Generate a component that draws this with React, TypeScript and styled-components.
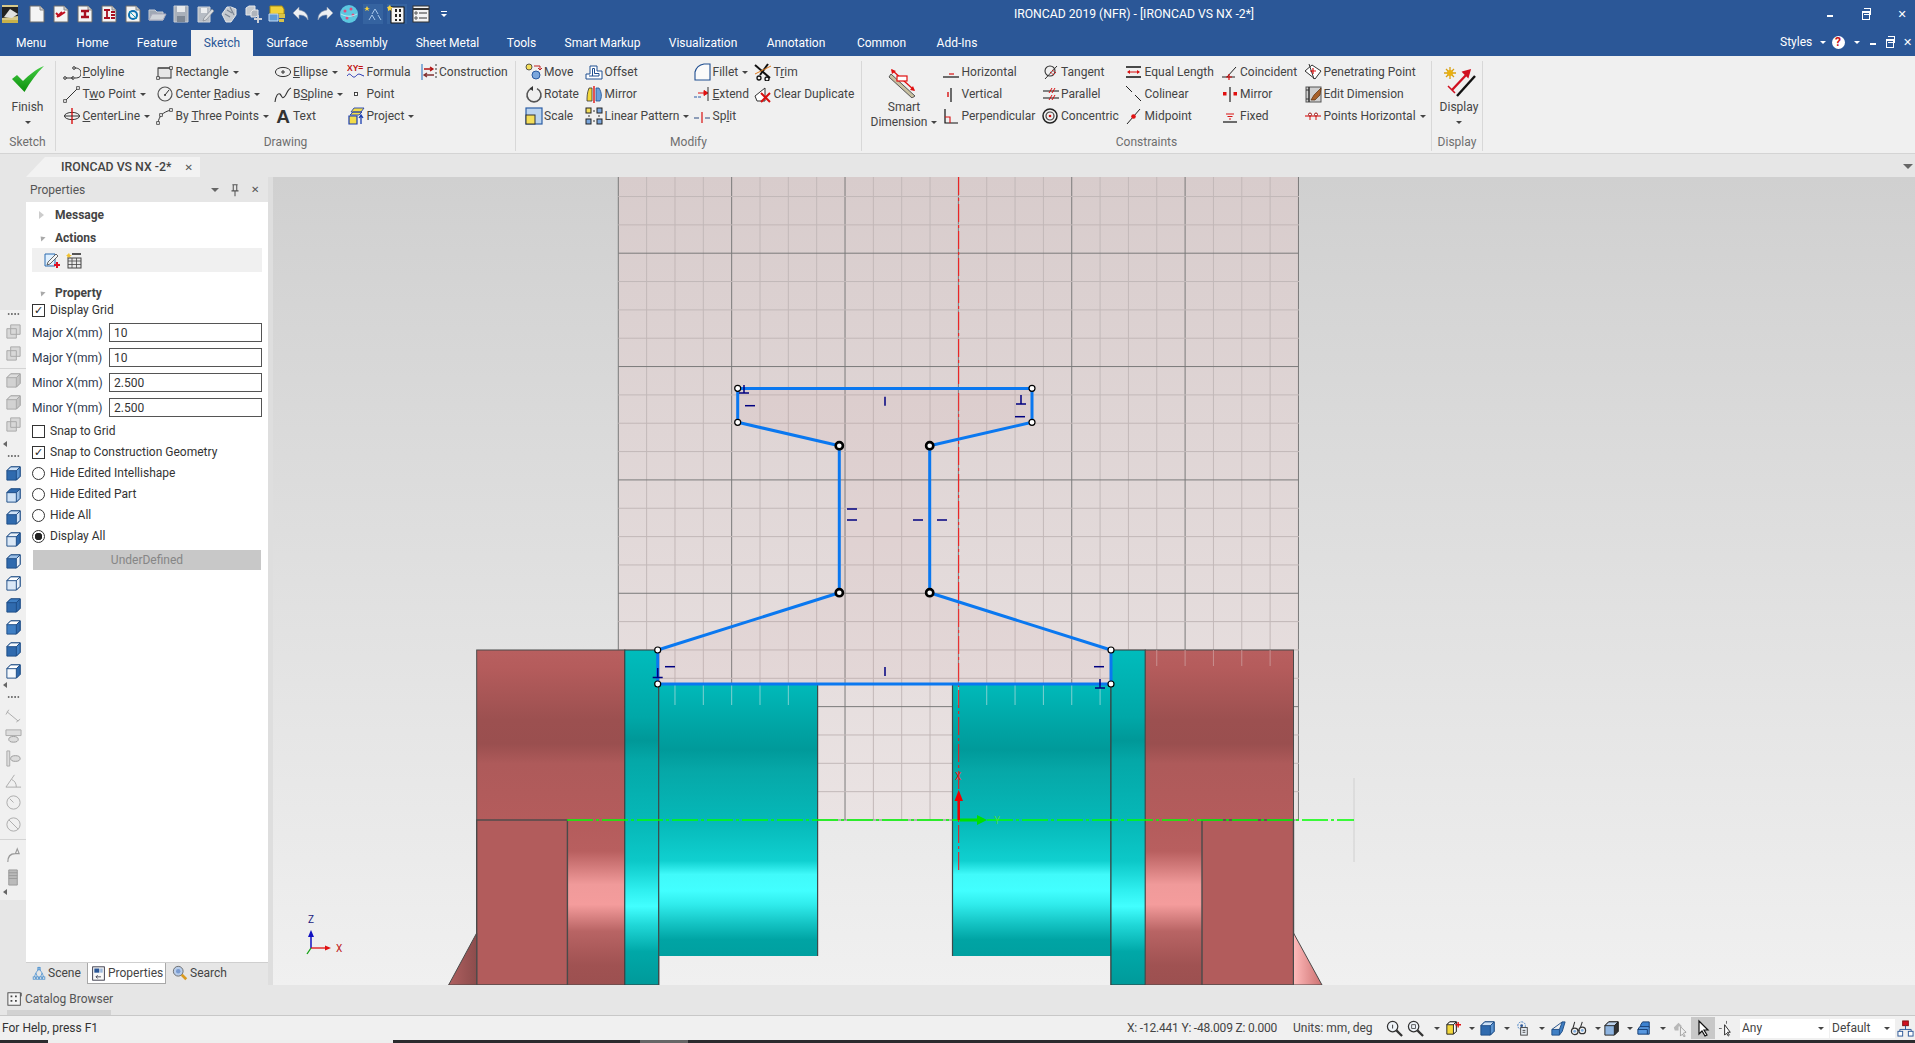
import React from 'react';
import styled, { createGlobalStyle } from 'styled-components';

const BLUE = '#2b5797';
const FONT = '"Roboto", "Liberation Sans", sans-serif';

const GlobalStyle = createGlobalStyle`
  html, body {
    margin: 0;
    padding: 0;
    overflow: hidden;
    background: #e6e6e6;
    font-family: ${FONT};
  }
`;

/* ---------- icons ---------- */

const s = (stroke: string, w = 1) => ({ stroke, strokeWidth: w, fill: 'none' });

const page = (inner?: React.ReactNode) => (
  <>
    <path d="M3 2h10l4 4v12H3z" fill="#f4f4f4" stroke="#6a6a6a" />
    <path d="M13 2v4h4" fill="#ccc" stroke="#8a8a8a" />
    {inner}
  </>
);

const cube = (top: string, side: string, front: string, line = '#1e4d86') => (
  <>
    <path d="M2 6l4-4h10v10l-4 4H2z" fill={front} stroke={line} />
    <path d="M2 6l4-4h10l-4 4z" fill={top} stroke={line} />
    <path d="M12 6l4-4v10l-4 4z" fill={side} stroke={line} />
  </>
);

const Q: Record<string, React.ReactNode> = {
  logo: (
    <>
      <rect x="1" y="1" width="16" height="18" fill="#d8c98a" />
      <path d="M1 3h16v9l-16 2z" fill="#222" />
      <path d="M3 13l6-8 8 5-6 4z" fill="#e0e0e0" />
      <rect x="1" y="16" width="16" height="3" fill="#c9b24a" />
    </>
  ),
  newDoc: page(),
  redCheck: page(<path d="M5 9l3 3 6-4M6 13l5-5" {...s('#c01020', 2)} />),
  redI: page(<path d="M6 7h8M10 7v6M6 13h8" {...s('#a81020', 2.4)} />),
  redE: page(<path d="M5 6h6M8 6v8M5 14h6M12 8h4M12 11h4M12 14h4" {...s('#a81020', 1.8)} />),
  blueDoc: page(
    <>
      <circle cx="10" cy="11" r="4" {...s('#1070b0', 2)} />
      <path d="M6 7l8 8" {...s('#18a0c0', 1)} />
    </>
  ),
  folder: (
    <>
      <path d="M2 6h6l2 2h6v8H2z" fill="#9fa8b4" stroke="#c9ced6" />
      <path d="M5 10h14l-3 6H2z" fill="#cfd3d8" stroke="#aab" />
    </>
  ),
  save: (
    <>
      <path d="M3 2h14v16H3z" fill="#a9b0ba" stroke="#c7ccd3" />
      <rect x="6" y="2" width="8" height="6" fill="#e8eaec" />
      <rect x="6" y="12" width="8" height="6" fill="#7d8794" />
    </>
  ),
  saveAs: (
    <>
      <path d="M3 3h12v15H3z" fill="#b6bcc4" stroke="#d0d4da" />
      <rect x="6" y="4" width="6" height="5" fill="#eceef0" />
      <path d="M9 14l8-9 2 2-8 9-3 1z" fill="#d9dcdf" stroke="#7a8088" strokeWidth=".6" />
    </>
  ),
  hand: (
    <>
      <path d="M3 10l5-7h4l5 2v6l-5 7H7z" fill="#c4c9cf" stroke="#e4e6e8" />
      <path d="M8 6l5 3M6 10l5 3M11 3l4 8" {...s('#7d8794', 1.2)} />
    </>
  ),
  cubesPlus: (
    <>
      <path d="M3 4l3-2h6v7l-3 2H3z" fill="#c4c9cf" stroke="#e6e8ea" />
      <path d="M8 8l2-2h5v5l-2 2H8z" fill="#aeb4bc" stroke="#e6e8ea" />
      <path d="M15 11v8M11 15h8" {...s('#ccd0d6', 2)} />
    </>
  ),
  layers: (
    <>
      <path d="M3 2h12l2 3v5H3z" fill="#f1d23a" stroke="#a88c10" />
      <path d="M2 10h9v7H2z" fill="#5f9bd6" stroke="#c6dcf2" />
      <path d="M12 10h6v4h-6zM12 15h5v3h-5z" fill="#d7c24a" />
    </>
  ),
  undo: <path d="M8 3L2 9l6 6v-4c4 0 7 1 9 5 0-6-3-9-9-10z" fill="#eef0f3" stroke="#8f9cb0" strokeWidth=".6" />,
  redo: <path d="M12 3l6 6-6 6v-4c-4 0-7 1-9 5 0-6 3-9 9-10z" fill="#eef0f3" stroke="#8f9cb0" strokeWidth=".6" />,
  globe: (
    <>
      <circle cx="10" cy="10" r="9" fill="#5cc8e0" />
      <circle cx="6" cy="7" r="1.5" fill="#e24b7c" />
      <circle cx="12" cy="5" r="1.5" fill="#e24b7c" />
      <circle cx="14" cy="11" r="1.5" fill="#e24b7c" />
      <circle cx="8" cy="14" r="1.5" fill="#e24b7c" />
      <path d="M2 10c5 3 11 3 16 0" {...s('#bde8f2', 1)} />
    </>
  ),
  tree: (
    <>
      <rect x="0" y="0" width="20" height="22" fill="#3563a0" />
      <path d="M3 4l1-2 1 2 2 0-2 1 1 2-2-1-2 1 1-2-2-1z" fill="#f4d03f" />
      <path d="M12 5l-3 5M12 5l3 5M9 11l-3 5M9 11l3 5M15 11l3 5" {...s('#a9c8ec', 1)} />
    </>
  ),
  film: (
    <>
      <rect x="0" y="0" width="20" height="22" fill="#3563a0" />
      <rect x="4" y="3" width="13" height="16" fill="#f4f4f4" stroke="#111" />
      <path d="M8 5h2v3H8zM12 5h2v3h-2zM8 10h2v3H8zM12 10h2v3h-2zM8 15h2v2H8zM12 15h2v2h-2z" fill="#222" />
      <path d="M1 3l2-2 1 2 2 0-2 2 1 2-2-1-2 1 0-2-1-2z" fill="#f4d03f" />
    </>
  ),
  list: (
    <>
      <rect x="2" y="2" width="16" height="16" fill="#f4f4f4" stroke="#333" />
      <path d="M2 5h16" {...s('#333', 2)} />
      <path d="M4 8h2v2H4zM4 13h2v2H4z" fill="#fff" stroke="#333" strokeWidth=".8" />
      <path d="M8 9h8M8 14h8" {...s('#333', 1)} />
    </>
  ),
};

const sq = (x: number, y: number, fill = '#fff') => (
  <rect x={x - 1.3} y={y - 1.3} width="2.6" height="2.6" fill={fill} stroke="#333" strokeWidth=".8" />
);

const R: Record<string, React.ReactNode> = {
  polyline: (
    <>
      <path d="M3 15h7M12 15c5 0 6-2 6-5s-2-5-6-5" {...s('#333')} />
      <circle cx="2" cy="15" r="1.3" {...s('#333')} />
      <circle cx="10" cy="15" r="1.3" {...s('#333')} />
      <circle cx="11" cy="5" r="1.3" {...s('#333')} />
    </>
  ),
  twoPoint: (
    <>
      <path d="M2 16L15 3" {...s('#333')} />
      {sq(2, 16)}
      {sq(15, 3)}
    </>
  ),
  centerLine: (
    <>
      <ellipse cx="9" cy="9" rx="7.5" ry="3.6" {...s('#333')} />
      <path d="M9 1v16" {...s('#d81010', 1.4)} />
      <path d="M1 9h16" {...s('#333', 1)} />
    </>
  ),
  rectangle: (
    <>
      <rect x="2" y="5" width="13" height="10" fill="#e7e7e7" stroke="#333" />
      <path d="M2 5h13" {...s('#555', 1.4)} />
      {sq(2, 15)}
      {sq(15, 5)}
    </>
  ),
  centerRadius: (
    <>
      <circle cx="9" cy="9" r="7" {...s('#555', 1.2)} />
      <circle cx="9" cy="10" r="1" fill="#333" />
      <path d="M9 10l4-5" {...s('#333')} />
    </>
  ),
  threePoints: (
    <>
      <path d="M2 16C3 9 7 5 15 3" {...s('#333')} />
      {sq(2, 16)}
      {sq(5, 8)}
      {sq(15, 3)}
    </>
  ),
  ellipse: (
    <>
      <ellipse cx="9" cy="9" rx="7.6" ry="4.6" {...s('#333')} />
      <path d="M9 7v4M7 9h4" {...s('#333')} />
    </>
  ),
  bspline: <path d="M1 17c1-7 3-9 5-8 2 2 2 6 5 2 2-3 3-7 6-8" {...s('#333', 1.1)} />,
  bigA: (
    <text x="9" y="16" textAnchor="middle" fontSize="19" fontWeight="700" fontFamily="Liberation Sans, sans-serif" fill="#333">
      A
    </text>
  ),
  formula: (
    <>
      <text x="0" y="8" fontSize="8.5" fontWeight="700" fontFamily="Liberation Sans, sans-serif" fill="#c01010">
        XY=
      </text>
      <path d="M0 13c2-3 3-2 5 0s3 1 5-1 4 0 7 1" {...s('#2030b0', 1)} />
    </>
  ),
  point: <rect x="7.5" y="7.5" width="3" height="3" fill="#fff" stroke="#333" strokeWidth=".9" />,
  project: (
    <>
      <path d="M4 5l3-4h10l-3 4zM3 8l3-3h9l-3 3z" fill="#f3dc4a" stroke="#2040b0" strokeWidth=".9" />
      <path d="M2 9h8v8H2z" fill="#f3dc4a" stroke="#1a3db0" strokeWidth="1.2" />
      <path d="M14 17V9M12 11l2-3 2 3" {...s('#1a3db0', 1.3)} />
    </>
  ),
  construction: (
    <>
      <path d="M2 1v16" {...s('#1f6fc0', 1)} />
      <path d="M16 1v16" stroke="#333" strokeDasharray="2 2" />
      <path d="M4 6h9M10 4l3 2-3 2" {...s('#b01010', 1.3)} />
      <path d="M5 12h9M7 10l-3 2 3 2" {...s('#803030', 1.3)} />
    </>
  ),
  move: (
    <>
      <circle cx="4" cy="4" r="3" fill="#f4de5a" stroke="#333" strokeWidth=".8" />
      <circle cx="11" cy="12" r="4" fill="#7aa6dc" stroke="#2a5aa0" />
      <path d="M9 3h6v4M13 5l2 2 2-2" {...s('#c02020', 1)} />
    </>
  ),
  rotate: (
    <>
      <path d="M6 3.6A7 7 0 1 0 12 3.6" {...s('#555', 1.6)} />
      <path d="M8 1v5L4.5 3.5z" fill="#333" />
    </>
  ),
  scale: (
    <>
      <rect x="1" y="1" width="16" height="16" fill="#bcd4ee" stroke="#2c5ea6" strokeWidth="1.2" />
      <rect x="1" y="8" width="9" height="9" fill="#f4de5a" stroke="#333" strokeWidth="1" />
    </>
  ),
  offset: (
    <>
      <path d="M1 16v-5h4V3h7v5h5v8z" fill="#fff" stroke="#1f4e90" />
      <path d="M4 13h10v-2.5H9.5V5.500H7.500V13" {...s('#1f4e90', 1)} />
    </>
  ),
  mirror: (
    <>
      <path d="M7 3H4C2 8 2 12 2 16h5z" fill="#f4d83a" stroke="#333" strokeWidth=".8" />
      <path d="M11 3h3c3 5 3 9 1 13h-4z" fill="#6aa0dc" stroke="#1f4e90" strokeWidth=".8" />
      <path d="M9 1v17" {...s('#e01010', 1.4)} />
    </>
  ),
  linear: (
    <>
      <path d="M4 4h10M4 14h10M4 4v10M14 4v10" stroke="#333" strokeDasharray="2 2" fill="none" />
      <rect x="1" y="1" width="5" height="5" fill="#f4de5a" stroke="#222" />
      <rect x="12" y="1" width="5" height="5" fill="#7aa6dc" stroke="#222" />
      <rect x="1" y="12" width="5" height="5" fill="#7aa6dc" stroke="#222" />
      <rect x="12" y="12" width="5" height="5" fill="#7aa6dc" stroke="#222" />
    </>
  ),
  fillet: <path d="M2 17V9C3 5 6 2 11 1h6v16z" fill="#fafafa" stroke="#1f4e90" strokeWidth="1.1" />,
  extend: (
    <>
      <path d="M1 12h8" {...s('#2a5ca8', 1)} strokeDasharray="3 1" />
      <path d="M5 8h9M11 5.500l4 2.500-4 2.500z" fill="#e01010" stroke="#e01010" />
      <path d="M15 2v14" {...s('#333', 1)} />
    </>
  ),
  split: (
    <>
      <path d="M1 11h5M12 11h5" {...s('#2a4a80', 1)} />
      <path d="M9 5v11" {...s('#d81010', 1.2)} />
    </>
  ),
  trim: (
    <>
      <path d="M1 2l15 13" {...s('#111', 2)} />
      <path d="M14 1L6 12" {...s('#111', 2)} />
      <path d="M1 11l16-8" {...s('#e07818', 1)} />
      <circle cx="5" cy="15" r="2" {...s('#111', 1.3)} />
      <circle cx="13" cy="16" r="2" {...s('#111', 1.3)} />
    </>
  ),
  clearDup: (
    <>
      <path d="M1 11l10-8v13H3z" fill="#fff" stroke="#333" />
      <path d="M7 8l9 9M16 8l-9 9" {...s('#d81010', 2)} />
    </>
  ),
  horizontal: (
    <>
      <path d="M1 14h16" {...s('#111', 1.2)} />
      <path d="M7 11h5" {...s('#d81010', 1.2)} />
    </>
  ),
  vertical: (
    <>
      <path d="M9 3v14" {...s('#111', 1.2)} />
      <path d="M6 7v5" {...s('#d81010', 1.4)} />
    </>
  ),
  perpendicular: (
    <>
      <path d="M3 2v14h13" {...s('#111', 1.2)} />
      <path d="M3 10h5v6" {...s('#d81010', 1.1)} />
    </>
  ),
  tangent: (
    <>
      <circle cx="8" cy="8" r="5" {...s('#333', 1.1)} />
      <path d="M3 16L15 3" {...s('#333', 1)} />
      <path d="M8 9l4 3M10 7l4 3" {...s('#d81010', 1)} strokeDasharray="2 1" />
    </>
  ),
  parallel: (
    <>
      <path d="M1 6h16M1 13h16" {...s('#111', 1.2)} />
      <path d="M7 8l3-5M10 8l3-5M7 15l3-5M10 15l3-5" {...s('#d81010', 1)} />
    </>
  ),
  concentric: (
    <>
      <circle cx="8" cy="9" r="7" {...s('#222', 1.5)} />
      <circle cx="8" cy="9" r="4" {...s('#444', 1.2)} />
      <circle cx="8" cy="9" r="1.300" fill="#d81010" />
    </>
  ),
  equal: (
    <>
      <path d="M1 4h15M1 14h15" {...s('#111', 1.3)} />
      <path d="M3 9h11" {...s('#d81010', 1)} />
      <path d="M5 7L2 9l3 2zM12 7l3 2-3 2z" fill="#d81010" />
    </>
  ),
  colinear: <path d="M1 1l6 6M10 10l6 6" {...s('#222', 1)} />,
  midpoint: (
    <>
      <path d="M2 17L15 2" {...s('#222', 1)} />
      <circle cx="8.500" cy="9.500" r="2.300" fill="#e01010" />
    </>
  ),
  coincident: (
    <>
      <path d="M1 14h13M6 14L15 4" {...s('#222', 1)} />
      <path d="M8 11v6M5 14h6" {...s('#d81010', 1.2)} />
    </>
  ),
  mirrorC: (
    <>
      <path d="M9 2v15" {...s('#222', 1.2)} />
      <rect x="2" y="7" width="3.500" height="3.500" fill="#e01010" />
      <rect x="12.500" y="7" width="3.500" height="3.500" fill="#e01010" />
    </>
  ),
  fixed: (
    <>
      <path d="M2 15h14" {...s('#111', 1.2)} />
      <path d="M5 7h8M6.500 9.500h5M8 12h2" {...s('#d81010', 1)} />
    </>
  ),
  penetrating: (
    <>
      <path d="M1 8l7-6 9 6-6 8z" fill="#fff" stroke="#333" />
      <path d="M5 1l5 15" {...s('#333', 1)} />
      <path d="M9 5v6M6 8h6" {...s('#d81010', 1.2)} />
    </>
  ),
  editDim: (
    <>
      <rect x="2" y="2" width="15" height="15" fill="#cfcfcf" stroke="#555" />
      <path d="M5 2v15" {...s('#333', 1.5)} />
      <path d="M7 15l3-5 7-7-1 7-5 5z" fill="#a8602a" stroke="#5a3010" strokeWidth=".7" />
      <path d="M2 5h3M2 14h3" {...s('#333', 1)} />
    </>
  ),
  pointsH: (
    <>
      <path d="M1 9h16" {...s('#d81010', 1.1)} />
      <circle cx="6" cy="7.500" r="1.500" fill="#fff" stroke="#a01010" />
      <circle cx="12" cy="7.500" r="1.500" fill="#fff" stroke="#a01010" />
      <path d="M6 9v4M12 9v4" {...s('#d81010', 1)} />
    </>
  ),
};

const P: Record<string, React.ReactNode> = {
  sketchAdd: (
    <>
      <path d="M2 3h10v12H2z" fill="#dff0ff" stroke="#2a6bb0" />
      <path d="M5 11l8-8 2 2-8 8-3 1z" fill="#f4f4f4" stroke="#444" strokeWidth=".8" />
      <path d="M14 11v6M11 14h6" {...s('#e01020', 2)} />
    </>
  ),
  table: (
    <>
      <path d="M2 4l2-2 1 2 2 0-2 1.500 1 2-2-1.500-2 1.500 .5-2L1 4z" fill="#f2c230" />
      <path d="M7 2h9v2H7z" fill="#555" />
      <rect x="3" y="7" width="13" height="10" fill="#e8e8e8" stroke="#444" />
      <path d="M3 10h13M3 13.500h13M7 7v10M11.500 7v10" {...s('#444', .8)} />
    </>
  ),
  scene: (
    <>
      <path d="M9 3V1M9 3L5 9M9 3l4 6M5 9l-2 5M5 9l2 5M13 9l-2 5M13 9l2 5" {...s('#4a90d0', 1)} />
      <rect x="7.500" y="2" width="3" height="3" {...s('#4a90d0', 1)} />
      <rect x="1.500" y="14" width="3" height="3" {...s('#4a90d0', 1)} />
      <rect x="5.500" y="14" width="3" height="3" {...s('#4a90d0', 1)} />
      <rect x="9.500" y="14" width="3" height="3" {...s('#4a90d0', 1)} />
      <rect x="13.500" y="14" width="3" height="3" {...s('#4a90d0', 1)} />
    </>
  ),
  props: (
    <>
      <rect x="2" y="1" width="14" height="16" fill="#f8f8f8" stroke="#223" />
      <rect x="4" y="3" width="6" height="5" fill="#2b5797" />
      <rect x="11" y="3" width="3" height="5" fill="#9bb8dc" />
      <path d="M6 13H12M6 13l2-2M6 13l2 2" {...s('#223', .9)} />
    </>
  ),
  search: (
    <>
      <circle cx="7" cy="7" r="5.500" fill="#b8cdea" stroke="#666" />
      <circle cx="7" cy="7" r="2.500" fill="#7a9bd0" />
      <path d="M11 11l5 5" {...s('#d99a20', 3)} />
    </>
  ),
  catalog: (
    <>
      <rect x="1" y="2" width="14" height="14" fill="#f4f4f4" stroke="#444" />
      <path d="M4 5h2v2H4zM9 5h2v2H9zM4 10h2v2H4zM9 10h2v2H9z" fill="#444" />
      <path d="M16 2v4" {...s('#444', 1)} />
    </>
  ),
  pin: <path d="M5 2h6M6 2v7M10 2v7M4 9h8M8 9v6" {...s('#555', 1.2)} />,
};

const gc = cube('#dedede', '#c4c4c4', '#d2d2d2', '#a8a8a8');
const wireGray = (
  <>
    <path d="M2 6h10v10H2zM6 2h10v10H6z" fill="#d8d8d8" stroke="#a8a8a8" />
  </>
);
const bigDim: Record<string, React.ReactNode> = {
  finish: (
    <>
      <defs>
        <linearGradient id="finishGreen" x1="0" x2="0" y1="0" y2="1">
          <stop offset="0" stopColor="#44cc44" />
          <stop offset="1" stopColor="#0a8f0a" />
        </linearGradient>
      </defs>
      <path d="M0 13l5-4 6 6C17 9 24 3 32 0 C25 7 18 16 12.500 26z" fill="url(#finishGreen)" />
    </>
  ),
  smart: (
    <>
      <path d="M3 8L27 30l-3 2L1 11z" fill="#c8c0a0" stroke="#555" strokeWidth="1" />
      <path d="M4 4L26 24" {...s('#e01010', 1.3)} />
      <path d="M3 3l1 5 4-3zM27 25l-5-1 3-4z" fill="#e01010" />
      <rect x="9" y="10" width="10" height="5" fill="#fff" stroke="#e01010" strokeWidth="1.2" />
    </>
  ),
  display: (
    <>
      <path d="M7 1v12M1 7h12M3 3l8 8M11 3l-8 8" {...s('#d8a010', 1.3)} />
      <circle cx="7" cy="7" r="3" fill="#e8b010" />
      <path d="M9 24L24 8" {...s('#d01020', 2.4)} />
      <path d="M20 6l7-2-2 7zM5 20l7 7" fill="#d01020" stroke="#d01020" strokeWidth="1.500" />
      <path d="M14 30L32 10" {...s('#111', 2.4)} />
    </>
  ),
};

const T: Record<string, React.ReactNode> = {
  mag: (
    <>
      <circle cx="7" cy="7" r="5.500" fill="#eef3f8" stroke="#333" strokeWidth="1.300" />
      <path d="M11 11l6 6" {...s('#333', 2.400)} />
      <path d="M7 5v4" {...s('#333', 1)} />
    </>
  ),
  mag2: (
    <>
      <circle cx="7" cy="7" r="5.500" fill="#eef3f8" stroke="#333" strokeWidth="1.300" />
      <path d="M11 11l6 6" {...s('#333', 2.400)} />
      <rect x="5" y="5" width="4" height="4" {...s('#333', .8)} />
    </>
  ),
  yCube: (
    <>
      <path d="M3 5l3-3h7v10l-3 3H3z" fill="#f3d83a" stroke="#222" />
      <path d="M3 5l3-3h7l-3 3zM10 5l3-3v10l-3 3z" fill="#fff" stroke="#222" />
      <path d="M15 2v6M12 5h6" {...s('#e01010', 1.400)} />
    </>
  ),
  bCube: cube('#cfe2f6', '#5a93d0', '#2f6aae'),
  blue3: (
    <>
      <circle cx="7" cy="6" r="4" {...s('#3878c0', 1)} strokeDasharray="2 1" />
      <circle cx="7" cy="6" r="1.500" fill="#2b5797" />
      <rect x="6" y="8" width="7" height="8" fill="#e8eef4" stroke="#444" />
      <path d="M8 11h3M8 13h3" {...s('#444', 1)} />
    </>
  ),
  wedge: <path d="M2 16v-6L13 2h3l-3 10-3 4zM2 10h8l3-8M10 10v6" fill="#3f7fc4" stroke="#1e4d86" />,
  glasses: (
    <>
      <circle cx="5" cy="12" r="3.500" {...s('#333', 1.300)} />
      <circle cx="13" cy="11" r="3.500" {...s('#333', 1.300)} />
      <path d="M3 9L5 2M11 8l2-6M8 11h2" {...s('#333', 1.100)} />
      <circle cx="5" cy="12" r="1.500" fill="#80aee0" />
      <circle cx="13" cy="11" r="1.500" fill="#80aee0" />
    </>
  ),
  frameCube: cube('#bcd2ec', '#333', '#8eb4e0', '#222'),
  stackCube: (
    <>
      <path d="M5 5l2-3h7v6H5z" fill="#3d82d0" stroke="#123a70" />
      <path d="M2 10l2-3h10v8H2z" fill="#5898e0" stroke="#123a70" />
      <path d="M2 10h10v5" {...s('#123a70', 1)} />
    </>
  ),
  grayArrow: (
    <>
      <path d="M3 8l5-5 4 4H8v4H4z" fill="#b8b8b8" />
      <path d="M10 7v10l2-2 2 3 1-1-2-3 3-1z" fill="#f0f0f0" stroke="#a0a0a0" />
    </>
  ),
  arrow: <path d="M5 2v13l3-3 3 5 2-1-3-5h4z" fill="#fff" stroke="#111" strokeWidth="1.200" />,
  arrowBox: (
    <>
      <path d="M1 9h3M9 1v3" stroke="#666" />
      <path d="M7 5v11l2-2 2 3 1-1-2-3h3z" fill="#fff" stroke="#222" />
    </>
  ),
  org: (
    <>
      <rect x="6" y="1" width="6" height="5" fill="#d01020" stroke="#801010" />
      <path d="M9 6v4M3 10h12M3 10v2M15 10v2" {...s('#2b5797', 1)} />
      <rect x="1" y="12" width="5" height="5" fill="#fff" stroke="#2b5797" />
      <rect x="12" y="12" width="5" height="5" fill="#fff" stroke="#2b5797" />
    </>
  ),
};

const Svg = styled.svg`
  display: block;
  flex: none;
`;

function Icon({ d, size = 18, box = 18 }: { d: React.ReactNode; size?: number; box?: number }) {
  return (
    <Svg width={size} height={size} viewBox={`0 0 ${box} ${box}`}>
      {d}
    </Svg>
  );
}

/* ---------- data ---------- */

type Item = { icon: string; label: string; u?: string; menu?: boolean };
type Col = { w: number; items: Item[] };

const drawingCols: Col[] = [
  { w: 93, items: [
    { icon: 'polyline', label: 'Polyline', u: 'P' },
    { icon: 'twoPoint', label: 'Two Point', u: 'w', menu: true },
    { icon: 'centerLine', label: 'CenterLine', u: 'C', menu: true },
  ] },
  { w: 117.5, items: [
    { icon: 'rectangle', label: 'Rectangle', menu: true },
    { icon: 'centerRadius', label: 'Center Radius', u: 'R', menu: true },
    { icon: 'threePoints', label: 'By Three Points', u: 'T', menu: true },
  ] },
  { w: 73.5, items: [
    { icon: 'ellipse', label: 'Ellipse', u: 'E', menu: true },
    { icon: 'bspline', label: 'BSpline', u: 'S', menu: true },
    { icon: 'bigA', label: 'Text' },
  ] },
  { w: 72.5, items: [
    { icon: 'formula', label: 'Formula' },
    { icon: 'point', label: 'Point' },
    { icon: 'project', label: 'Project', menu: true },
  ] },
  { w: 80, items: [{ icon: 'construction', label: 'Construction' }] },
];

const modifyCols: Col[] = [
  { w: 60.5, items: [
    { icon: 'move', label: 'Move' },
    { icon: 'rotate', label: 'Rotate' },
    { icon: 'scale', label: 'Scale' },
  ] },
  { w: 108, items: [
    { icon: 'offset', label: 'Offset' },
    { icon: 'mirror', label: 'Mirror' },
    { icon: 'linear', label: 'Linear Pattern', menu: true },
  ] },
  { w: 61, items: [
    { icon: 'fillet', label: 'Fillet', menu: true },
    { icon: 'extend', label: 'Extend', u: 'E' },
    { icon: 'split', label: 'Split', u: 'l' },
  ] },
  { w: 100, items: [
    { icon: 'trim', label: 'Trim', u: 'r' },
    { icon: 'clearDup', label: 'Clear Duplicate' },
  ] },
];

const constraintCols: Col[] = [
  { w: 99.5, items: [
    { icon: 'horizontal', label: 'Horizontal' },
    { icon: 'vertical', label: 'Vertical' },
    { icon: 'perpendicular', label: 'Perpendicular' },
  ] },
  { w: 83.5, items: [
    { icon: 'tangent', label: 'Tangent' },
    { icon: 'parallel', label: 'Parallel' },
    { icon: 'concentric', label: 'Concentric' },
  ] },
  { w: 95.5, items: [
    { icon: 'equal', label: 'Equal Length' },
    { icon: 'colinear', label: 'Colinear' },
    { icon: 'midpoint', label: 'Midpoint' },
  ] },
  { w: 83.5, items: [
    { icon: 'coincident', label: 'Coincident' },
    { icon: 'mirrorC', label: 'Mirror' },
    { icon: 'fixed', label: 'Fixed' },
  ] },
  { w: 125, items: [
    { icon: 'penetrating', label: 'Penetrating Point' },
    { icon: 'editDim', label: 'Edit Dimension' },
    { icon: 'pointsH', label: 'Points Horizontal', menu: true },
  ] },
];

const menuTabs = [
  { label: 'Menu', w: 62 },
  { label: 'Home', w: 61 },
  { label: 'Feature', w: 68 },
  { label: 'Sketch', w: 62, active: true },
  { label: 'Surface', w: 68 },
  { label: 'Assembly', w: 81 },
  { label: 'Sheet Metal', w: 91 },
  { label: 'Tools', w: 57 },
  { label: 'Smart Markup', w: 105 },
  { label: 'Visualization', w: 96 },
  { label: 'Annotation', w: 90 },
  { label: 'Common', w: 81 },
  { label: 'Add-Ins', w: 70 },
];

const qatIcons = ['newDoc', 'redCheck', 'redI', 'redE', 'blueDoc', 'folder', 'save', 'saveAs', 'hand', 'cubesPlus', 'layers', 'undo', 'redo', 'globe', 'tree', 'film', 'list'];

const statusSlots = [
  { w: 22.5, icon: 'mag' }, { w: 20.5, icon: 'mag2' }, { w: 17.5 },
  { w: 18, icon: 'yCube' }, { w: 17 },
  { w: 17, icon: 'bCube' }, { w: 19 },
  { w: 17.5, icon: 'blue3' }, { w: 16 },
  { w: 20.5, icon: 'wedge' },
  { w: 19, icon: 'glasses' }, { w: 16 },
  { w: 16.5, icon: 'frameCube' }, { w: 16.500 },
  { w: 16, icon: 'stackCube' }, { w: 16 },
  { w: 22, icon: 'grayArrow' },
  { w: 24, icon: 'arrow', active: true },
  { w: 23.5, icon: 'arrowBox' },
];

const blueCubes = [
  cube('#cfe2f6', '#5a93d0', '#2f6aae'),
  cube('#2f6aae', '#9dc0e6', '#cfe2f6'),
  cube('#cfe2f6', '#cfe2f6', '#2f6aae'),
  cube('#e8f0f8', '#2f6aae', '#dbe8f6'),
  cube('#9dc0e6', '#e8f0f8', '#2f6aae'),
  cube('#fff', '#e8f0f8', '#dbe8f6'),
  cube('#3f7fc4', '#2f6aae', '#2f6aae'),
  cube('#fff', '#2f6aae', '#3f7fc4'),
  cube('#f4f8fc', '#3f7fc4', '#2f6aae'),
  cube('#fff', '#2f6aae', '#f4f8fc'),
];

const measureIcons = [
  <path d="M2 6l12 10M1 9l3-5M12 17l4-3" {...s('#aaa', 1)} />,
  <><path d="M1 2h16v6H1z" fill="#ddd" stroke="#aaa" /><ellipse cx="9" cy="12" rx="5" ry="3" fill="#ddd" stroke="#999" /></>,
  <><path d="M2 1h3v16H2z" fill="#ddd" stroke="#aaa" /><ellipse cx="11" cy="9" rx="5" ry="3" fill="#ddd" stroke="#999" /></>,
  <path d="M1 16h16M1 16L10 3M7 8c3 1 5 4 5 8" {...s('#aaa', 1)} />,
  <><circle cx="9" cy="9" r="7" {...s('#aaa', 1)} /><path d="M9 9L5 5" {...s('#aaa', 1)} /></>,
  <><circle cx="9" cy="9" r="7" {...s('#aaa', 1)} /><path d="M4 4l10 10" {...s('#aaa', 1)} /></>,
];

/* ---------- helpers ---------- */

function Accel({ label, u }: { label: string; u?: string }) {
  if (!u) return <>{label}</>;
  const i = label.indexOf(u);
  return (
    <>
      {label.slice(0, i)}
      <u>{u}</u>
      {label.slice(i + 1)}
    </>
  );
}

function Columns({ cols }: { cols: Col[] }) {
  return (
    <>
      {cols.map((c, i) => (
        <RibbonCol key={i} $w={c.w}>
          {c.items.map(it => (
            <RibbonItem key={it.label}>
              <IconSlot>
                <Icon d={R[it.icon]} />
              </IconSlot>
              <span>
                <Accel label={it.label} u={it.u} />
              </span>
              {it.menu && <Caret />}
            </RibbonItem>
          ))}
        </RibbonCol>
      ))}
    </>
  );
}

/* ---------- cad view ---------- */

const range = (from: number, to: number, step: number) => {
  const out: number[] = [];
  for (let v = from; v <= to + 0.01; v += step) out.push(v);
  return out;
};

const SX0 = 618.3;
const SX1 = 1299;
const SY1 = 820;
const SY0 = 177;
const MINOR = 28.34;

const profile = 'M737.7 388.5H1032V422.300L929.700 445.700V592.700L1111 650V684H657.700V650L839.300 592.700V445.700L737.700 422.300Z';
const vertices: [number, number, boolean][] = [
  [737.7, 388.3, false], [1032, 388.3, false], [737.7, 422.3, false], [1032, 422.3, false],
  [839.3, 445.7, true], [929.7, 445.7, true], [839.3, 592.7, true], [929.7, 592.7, true],
  [657.7, 650, false], [1111, 650, false], [657.7, 684, false], [1111, 684, false],
];
const dashes: [number, number][] = [
  [745, 405.7], [1015, 416.7], [847, 509], [847, 520], [913, 520], [937, 520], [665, 666.7], [1094, 666.7],
];
const perps: [number, number, number][] = [
  [744, 385, 393], [1021, 395, 404], [657.7, 668, 677.5], [1100, 679, 688],
];

function CadView() {
  return (
    <Svg width="1642" height="808" viewBox="273 177 1642 808">
      <defs>
        <linearGradient id="sheet" gradientUnits="userSpaceOnUse" x1="0" x2="0" y1="177" y2="820">
          <stop offset="0" stopColor="#d8cccc" />
          <stop offset="1" stopColor="#eae3e3" />
        </linearGradient>
        <linearGradient id="red" gradientUnits="userSpaceOnUse" x1="0" x2="0" y1="650" y2="985">
          <stop offset="0" stopColor="#b85f5f" />
          <stop offset=".05" stopColor="#b55c5c" />
          <stop offset=".21" stopColor="#9c5050" />
          <stop offset=".28" stopColor="#9a4f4f" />
          <stop offset=".34" stopColor="#ae5a5a" />
          <stop offset=".51" stopColor="#b45c5c" />
          <stop offset=".6" stopColor="#b85f5f" />
          <stop offset=".7" stopColor="#f09a9a" />
          <stop offset=".76" stopColor="#f49c9c" />
          <stop offset=".84" stopColor="#b86464" />
          <stop offset=".94" stopColor="#a05252" />
          <stop offset="1" stopColor="#9c5050" />
        </linearGradient>
        <linearGradient id="tealCol" gradientUnits="userSpaceOnUse" x1="0" x2="0" y1="650" y2="985">
          <stop offset="0" stopColor="#00bcbc" />
          <stop offset=".2" stopColor="#00a8a8" />
          <stop offset=".27" stopColor="#009898" />
          <stop offset=".33" stopColor="#04a8a8" />
          <stop offset=".51" stopColor="#06b8b8" />
          <stop offset=".63" stopColor="#0cc8c8" />
          <stop offset=".72" stopColor="#30f0f0" />
          <stop offset=".765" stopColor="#42ffff" />
          <stop offset=".82" stopColor="#20d8d8" />
          <stop offset=".9" stopColor="#00a8a8" />
          <stop offset="1" stopColor="#009a9a" />
        </linearGradient>
        <linearGradient id="tealIn" gradientUnits="userSpaceOnUse" x1="0" x2="0" y1="684" y2="956">
          <stop offset="0" stopColor="#00baba" />
          <stop offset=".13" stopColor="#00a8a8" />
          <stop offset=".24" stopColor="#009a9a" />
          <stop offset=".32" stopColor="#06a8a8" />
          <stop offset=".5" stopColor="#05b8b8" />
          <stop offset=".65" stopColor="#10d0d0" />
          <stop offset=".7" stopColor="#40fafa" />
          <stop offset=".76" stopColor="#42ffff" />
          <stop offset=".81" stopColor="#30ecec" />
          <stop offset=".88" stopColor="#14c4c4" />
          <stop offset=".94" stopColor="#00a4a4" />
          <stop offset="1" stopColor="#00a0a0" />
        </linearGradient>
        <linearGradient id="wedgeL" x1="0" x2="1" y1="0" y2="0">
          <stop offset="0" stopColor="#b06060" />
          <stop offset="1" stopColor="#8c4c4c" />
        </linearGradient>
        <linearGradient id="wedgeR" x1="0" x2="1" y1="0" y2="0">
          <stop offset="0" stopColor="#fbb" />
          <stop offset="1" stopColor="#cc7070" />
        </linearGradient>
      </defs>

      {/* sketch sheet and grid */}
      <rect x={SX0} y={SY0} width={SX1 - SX0} height={SY1 - SY0} fill="url(#sheet)" />
      {range(SX0, SX1, MINOR).map((x, i) => (
        <line key={i} x1={x} x2={x} y1={SY0} y2={SY1} stroke={i % 4 === 0 ? '#7a7a7a' : '#c2b8b8'} strokeWidth="1" />
      ))}
      {range(SY1 - MINOR * 22, SY1, MINOR).map((y, i) => (
        <line key={i} x1={SX0} x2={SX1} y1={y} y2={y} stroke={(22 - i) % 4 === 0 ? '#7a7a7a' : '#c2b8b8'} strokeWidth="1" />
      ))}

      {/* solids */}
      <rect x="476.7" y="650" width="148.100" height="335" fill="url(#red)" stroke="#4a4a4a" strokeWidth="1" />
      <rect x="476.7" y="820" width="90.700" height="165" fill="#b25c5c" stroke="#4a4a4a" strokeWidth="1.400" />
      <path d="M476.7 933L448.6 985H476.7Z" fill="url(#wedgeL)" stroke="#4a4a4a" />
      <rect x="624.8" y="650" width="33.900" height="335" fill="url(#tealCol)" stroke="#3a3a3a" strokeWidth="1" />
      <rect x="658.7" y="684" width="158.900" height="272" fill="url(#tealIn)" />
      <path d="M817.6 684V956M658.7 684V985" stroke="#3e4a4a" strokeWidth="1.200" fill="none" />
      <rect x="952.5" y="684" width="158.500" height="272" fill="url(#tealIn)" />
      <path d="M952.5 684V956M1111 684V985" stroke="#3e4a4a" strokeWidth="1.200" fill="none" />
      <rect x="1111" y="650" width="34.300" height="335" fill="url(#tealCol)" stroke="#3a3a3a" strokeWidth="1" />
      <rect x="1145.3" y="650" width="148.200" height="335" fill="url(#red)" stroke="#4a4a4a" strokeWidth="1" />
      <rect x="1202" y="820" width="91.500" height="165" fill="#b25c5c" stroke="#4a4a4a" strokeWidth="1.400" />
      <path d="M1293.5 933L1322 985H1293.5Z" fill="url(#wedgeR)" stroke="#4a4a4a" />

      {/* grid showing through the tops of the solids */}
      {range(SX0 + MINOR, SX1, MINOR)
        .filter(x => (x > 660 && x < 816) || (x > 954 && x < 1110))
        .map((x, i) => (
          <line key={i} x1={x} x2={x} y1="685" y2="705" stroke="#7fd0d0" strokeWidth="1" />
        ))}
      {range(SX0 + MINOR, SX1, MINOR)
        .filter(x => x > 1150 && x < 1292)
        .map((x, i) => (
          <line key={i} x1={x} x2={x} y1="650" y2="666" stroke="#c89090" strokeWidth="1" />
        ))}

      {/* axes */}
      <line x1="1354" x2="1354" y1="778" y2="862" stroke="#d0d0d0" strokeWidth="1" />
      <line x1="567" x2="1354" y1="820" y2="820" stroke="#00ff00" strokeWidth="1.600" strokeDasharray="26 3 3 3" />
      <line x1="958.7" x2="958.7" y1="177" y2="870" stroke="#ff1010" strokeWidth="1" strokeDasharray="18 3 3 3" />
      <path d="M958.7 820V800" stroke="#f00000" strokeWidth="2.500" />
      <path d="M954.500 801L958.700 790L963 801Z" fill="#f00000" />
      <path d="M960 820H978" stroke="#00e000" strokeWidth="3" />
      <path d="M977 815L987 820L977 825Z" fill="#00e000" />
      <AxisLabel x="994" y="824" fill="#40e040">Y</AxisLabel>
      <AxisLabel x="955" y="780" fill="#e02020">X</AxisLabel>

      {/* profile */}
      <path d={profile} fill="rgba(205,160,160,.1)" stroke="#0a78f0" strokeWidth="3" strokeLinejoin="round" />
      {dashes.map(([x, y], i) => (
        <line key={i} x1={x} x2={x + 10} y1={y} y2={y} stroke="#000080" strokeWidth="1.500" />
      ))}
      <path d="M885 396.7V405.7M885 667V676" stroke="#000080" strokeWidth="1.500" />
      {perps.map(([x, y0, y1], i) => (
        <path key={i} d={`M${x} ${y0}V${y1}M${x - 5} ${y1}H${x + 5}`} stroke="#000080" strokeWidth="1.500" fill="none" />
      ))}
      {vertices.map(([x, y, big], i) => (
        <circle key={i} cx={x} cy={y} r={big ? 3.6 : 3} fill="#fff" stroke="#000" strokeWidth={big ? 2.600 : 1.200} />
      ))}

      {/* triad */}
      <path d="M311 948V936" stroke="#1010c0" strokeWidth="1.500" />
      <path d="M308 937L311 930L314 937Z" fill="#1010c0" />
      <path d="M311 948H326" stroke="#e01010" strokeWidth="1.300" />
      <path d="M325 945.500L331 948L325 950.500Z" fill="#e01010" />
      <path d="M311 948L307 954" stroke="#10a010" strokeWidth="1.300" />
      <AxisLabel x="308" y="923" fill="#1a1a80">Z</AxisLabel>
      <AxisLabel x="336" y="952" fill="#c02020">X</AxisLabel>
    </Svg>
  );
}

/* ---------- page ---------- */

export default function App() {
  return (
    <Root>
      <GlobalStyle />
      <TitleBar>
        <QatLogo>
          <Icon d={Q.logo} size={20} box={20} />
        </QatLogo>
        {qatIcons.map(n => (
          <QatSlot key={n}>
            <Icon d={Q[n]} size={20} box={20} />
          </QatSlot>
        ))}
        <QatMore>
          <MoreBar />
          <Caret $light />
        </QatMore>
        <WindowTitle>IRONCAD 2019 (NFR) - [IRONCAD VS NX -2*]</WindowTitle>
        <WinBtn $w={26}>
          <MinBar />
        </WinBtn>
        <WinBtn $w={46}>
          <RestoreGlyph />
        </WinBtn>
        <WinBtn $w={26}>
          <CloseGlyph>✕</CloseGlyph>
        </WinBtn>
      </TitleBar>

      <TabRow>
        {menuTabs.map(t => (
          <MenuTab key={t.label} $w={t.w} $active={t.active}>
            {t.label}
          </MenuTab>
        ))}
        <TabRight>
          <StylesLabel>Styles</StylesLabel>
          <WinBtn $w={11}>
            <Caret $light />
          </WinBtn>
          <WinBtn $w={20}>
            <HelpGlyph>?</HelpGlyph>
          </WinBtn>
          <WinBtn $w={18}>
            <Caret $light />
          </WinBtn>
          <WinBtn $w={13}>
            <MinBar />
          </WinBtn>
          <WinBtn $w={21}>
            <RestoreGlyph />
          </WinBtn>
          <WinBtn $w={15}>
            <CloseGlyph>✕</CloseGlyph>
          </WinBtn>
        </TabRight>
      </TabRow>

      <Ribbon>
        <Group $w={56}>
          <GroupBody>
            <BigButton $w={55}>
              <BigIcon>
                <Icon d={bigDim.finish} size={32} box={32} />
              </BigIcon>
              <BigLabel>Finish</BigLabel>
              <BigCaret />
            </BigButton>
          </GroupBody>
          <GroupLabel>Sketch</GroupLabel>
        </Group>
        <Group $w={460}>
          <GroupBody $pad={7}>
            <Columns cols={drawingCols} />
          </GroupBody>
          <GroupLabel>Drawing</GroupLabel>
        </Group>
        <Group $w={346}>
          <GroupBody $pad={8.5}>
            <Columns cols={modifyCols} />
          </GroupBody>
          <GroupLabel>Modify</GroupLabel>
        </Group>
        <Group $w={570}>
          <GroupBody>
            <BigButton $w={80} $shift={2}>
              <BigIcon>
                <Icon d={bigDim.smart} size={32} box={32} />
              </BigIcon>
              <BigLabel>Smart</BigLabel>
              <BigLabel>
                Dimension
                <Caret />
              </BigLabel>
            </BigButton>
            <Columns cols={constraintCols} />
          </GroupBody>
          <GroupLabel>Constraints</GroupLabel>
        </Group>
        <Group $w={51}>
          <GroupBody>
            <BigButton $w={50} $shift={2}>
              <BigIcon>
                <Icon d={bigDim.display} size={33} box={33} />
              </BigIcon>
              <BigLabel>Display</BigLabel>
              <BigCaret />
            </BigButton>
          </GroupBody>
          <GroupLabel>Display</GroupLabel>
        </Group>
      </Ribbon>

      <DocBar>
        <DocTab>
          <DocTitle>IRONCAD VS NX -2*</DocTitle>
          <DocClose>✕</DocClose>
        </DocTab>
        <DocMenu />
      </DocBar>

      <Workspace>
        <StripColumn>
          <Strip>
            <Dots />
            <StripIcon><Icon d={wireGray} size={17} /></StripIcon>
            <StripIcon><Icon d={wireGray} size={17} /></StripIcon>
            <StripRule $mb={0} />
            <StripIcon><Icon d={gc} size={17} /></StripIcon>
            <StripIcon><Icon d={gc} size={17} /></StripIcon>
            <StripIcon><Icon d={wireGray} size={17} /></StripIcon>
            <StripBack $mt={6} />
            <Dots />
            {blueCubes.map((c, i) => (
              <StripIcon key={i}><Icon d={c} size={17} /></StripIcon>
            ))}
            <StripBack $mt={0} />
            <Dots />
            {measureIcons.map((d, i) => (
              <StripIcon key={i}><Icon d={d} size={17} /></StripIcon>
            ))}
            <StripRule $mb={4} />
            <StripIcon><Icon size={17} d={<path d="M3 16c0-6 2-9 8-9M13 2l2 5h-4z" {...s('#999', 1.200)} />} /></StripIcon>
            <StripIcon><Icon size={17} d={<path d="M4 1h9v16H4zM4 4h9M4 7h9M4 10h9" fill="#bbb" stroke="#999" />} /></StripIcon>
            <StripBack $mt={1} />
          </Strip>
        </StripColumn>

        <Panel>
          <PanelHeader>
            <span>Properties</span>
            <PanelTools>
              <HeaderCaret />
              <Icon d={P.pin} size={14} box={16} />
              <HeaderClose>✕</HeaderClose>
            </PanelTools>
          </PanelHeader>
          <PanelBody>
            <SectionRow $h={25}>
              <Disclose $open={false} />
              <SectionTitle>Message</SectionTitle>
            </SectionRow>
            <SectionRow $h={21}>
              <Disclose $open />
              <SectionTitle>Actions</SectionTitle>
            </SectionRow>
            <ActionStrip>
              <Icon d={P.sketchAdd} />
              <Icon d={P.table} />
            </ActionStrip>
            <SectionRow $h={20} $mt={11}>
              <Disclose $open />
              <SectionTitle>Property</SectionTitle>
            </SectionRow>
            <CheckRow $h={14}>
              <CheckBox $checked>✓</CheckBox>
              Display Grid
            </CheckRow>
            <FieldList>
              {[
                ['Major X(mm)', '10'],
                ['Major Y(mm)', '10'],
                ['Minor X(mm)', '2.500'],
                ['Minor Y(mm)', '2.500'],
              ].map(([label, value]) => (
                <FieldRow key={label}>
                  <FieldLabel>{label}</FieldLabel>
                  <FieldInput readOnly value={value} />
                </FieldRow>
              ))}
            </FieldList>
            <OptionList>
              <CheckRow $h={21}>
                <CheckBox />
                Snap to Grid
              </CheckRow>
              <CheckRow $h={21}>
                <CheckBox $checked>✓</CheckBox>
                Snap to Construction Geometry
              </CheckRow>
              {['Hide Edited Intellishape', 'Hide Edited Part', 'Hide All'].map(l => (
                <CheckRow key={l} $h={21}>
                  <Radio />
                  {l}
                </CheckRow>
              ))}
              <CheckRow $h={21}>
                <Radio $on />
                Display All
              </CheckRow>
            </OptionList>
            <DisabledButton>UnderDefined</DisabledButton>
          </PanelBody>
          <PanelTabs>
            <PanelTab $w={60} $pl={4}>
              <Icon d={P.scene} size={14} />
              Scene
            </PanelTab>
            <PanelTab $w={79} $pl={3} $active>
              <Icon d={P.props} size={15} />
              Properties
            </PanelTab>
            <PanelTab $w={70} $pl={5}>
              <Icon d={P.search} size={16} />
              Search
            </PanelTab>
          </PanelTabs>
        </Panel>
        <Splitter />
        <Canvas>
          <CadView />
        </Canvas>
      </Workspace>

      <CatalogBar>
        <CatalogTab>
          <Icon d={P.catalog} size={16} />
          Catalog Browser
        </CatalogTab>
      </CatalogBar>

      <StatusBar>
        <HelpText>For Help, press F1</HelpText>
        <StatusRight>
          <StatusText $w={166} $tight>X: -12.441 Y: -48.009 Z: 0.000</StatusText>
          <StatusText $w={90}>Units: mm, deg</StatusText>
          {statusSlots.map((slot, i) => (
            <StatusSlot key={i} $w={slot.w} $active={slot.active}>
              {slot.icon ? <Icon d={T[slot.icon]} size={slot.active ? 18 : 17} /> : <Caret />}
            </StatusSlot>
          ))}
          <Combo $w={89} $ml={2}>
            Any
            <Caret />
          </Combo>
          <Combo $w={65} $ml={1}>
            Default
            <Caret />
          </Combo>
          <StatusSlot $w={20}>
            <Icon d={T.org} size={17} />
          </StatusSlot>
        </StatusRight>
      </StatusBar>

      <TaskStrip>
        <TaskPart $w={48} $c="#2b2b2e" />
        <TaskPart $w={345} $c="#eeeeee" />
        <TaskPart $w={247} $c="#2b2b2e" />
        <TaskPart $w={48} $c="#666" />
        <TaskPart $c="#2b2b2e" />
      </TaskStrip>
    </Root>
  );
}

/* ---------- styles ---------- */

const Root = styled.div`
  width: 1915px;
  height: 1043px;
  display: flex;
  flex-direction: column;
  overflow: hidden;
  color: #444;
  font-size: 12px;
  background: #e6e6e6;
`;

const TitleBar = styled.div`
  height: 28px;
  flex: none;
  display: flex;
  align-items: center;
  background: ${BLUE};
  color: #fff;
`;

const QatLogo = styled.div`
  width: 25px;
  display: flex;
  justify-content: center;
  padding-right: 4px;
  box-sizing: border-box;
`;

const QatSlot = styled.div`
  width: 24px;
  display: flex;
  justify-content: center;
`;

const QatMore = styled.div`
  width: 14px;
  margin-left: 4px;
  display: flex;
  flex-direction: column;
  align-items: center;
  gap: 2px;
`;

const MoreBar = styled.div`
  width: 6px;
  height: 1px;
  background: #fff;
`;

const WindowTitle = styled.div`
  flex: 1;
  text-align: center;
  font-size: 12.2px;
`;

const WinBtn = styled.div<{ $w: number }>`
  width: ${p => p.$w}px;
  display: flex;
  justify-content: center;
  align-items: center;
  flex: none;
`;

const MinBar = styled.div`
  width: 6px;
  height: 2px;
  margin-top: 4px;
  background: #fff;
`;

const RestoreGlyph = styled.div`
  position: relative;
  width: 6px;
  height: 6px;
  margin-top: 2px;
  border: 1px solid #fff;
  border-top-width: 2px;
  &::before {
    content: '';
    position: absolute;
    left: 1px;
    top: -5px;
    width: 6px;
    height: 5px;
    border: 1px solid #fff;
    border-left: 0;
  }
`;

const CloseGlyph = styled.span`
  color: #fff;
  font-size: 11px;
  font-family: "DejaVu Sans", sans-serif;
  line-height: 1;
`;

const TabRow = styled.div`
  height: 28px;
  flex: none;
  display: flex;
  background: ${BLUE};
`;

const MenuTab = styled.div<{ $w: number; $active?: boolean }>`
  width: ${p => p.$w}px;
  margin-top: 2px;
  display: flex;
  align-items: center;
  justify-content: center;
  padding-bottom: 1px;
  box-sizing: border-box;
  color: ${p => (p.$active ? BLUE : '#fff')};
  background: ${p => (p.$active ? '#f0f0f0' : 'transparent')};
  font-size: 12px;
`;

const TabRight = styled.div`
  margin-left: auto;
  display: flex;
  align-items: center;
  width: 135px;
`;

const StylesLabel = styled.span`
  width: 37px;
  color: #fff;
`;

const HelpGlyph = styled.span`
  width: 13px;
  height: 13px;
  border-radius: 50%;
  background: #fff;
  color: #c81018;
  font-size: 12px;
  font-weight: 700;
  text-align: center;
  line-height: 13px;
`;

const Ribbon = styled.div`
  height: 98px;
  flex: none;
  display: flex;
  padding-top: 5px;
  padding-bottom: 2px;
  box-sizing: border-box;
  background: #f0f0f0;
  border-bottom: 1px solid #d4d4d4;
`;

const Group = styled.div<{ $w: number }>`
  width: ${p => p.$w}px;
  flex: none;
  display: flex;
  flex-direction: column;
  box-sizing: border-box;
  border-right: 1px solid #d8d8d8;
`;

const GroupBody = styled.div<{ $pad?: number }>`
  height: 71px;
  display: flex;
  padding-left: ${p => p.$pad || 0}px;
`;

const GroupLabel = styled.div`
  height: 20px;
  line-height: 22px;
  text-align: center;
  color: #6e6e6e;
`;

const RibbonCol = styled.div<{ $w: number }>`
  width: ${p => p.$w}px;
  flex: none;
  display: flex;
  flex-direction: column;
`;

const RibbonItem = styled.div`
  height: 22px;
  display: flex;
  align-items: center;
  white-space: nowrap;
`;

const IconSlot = styled.span`
  width: 19.5px;
  flex: none;
`;

const Caret = styled.span<{ $light?: boolean }>`
  display: inline-block;
  flex: none;
  width: 0;
  height: 0;
  margin-left: ${p => (p.$light ? 0 : 4)}px;
  vertical-align: middle;
  border-left: 3px solid transparent;
  border-right: 3px solid transparent;
  border-top: 3px solid ${p => (p.$light ? '#fff' : '#444')};
`;

const BigCaret = styled(Caret)`
  margin: 6px 0 0;
`;

const HeaderCaret = styled(Caret)`
  margin-left: 0;
  border-left-width: 4px;
  border-right-width: 4px;
  border-top-width: 4px;
  border-top-color: #666;
`;

const BigButton = styled.div<{ $w: number; $shift?: number }>`
  width: ${p => p.$w}px;
  flex: none;
  display: flex;
  flex-direction: column;
  align-items: center;
  padding-top: 3px;
  margin-left: ${p => p.$shift || 0}px;
  margin-right: ${p => -(p.$shift || 0)}px;
`;

const BigIcon = styled.div`
  height: 36px;
  display: flex;
  align-items: center;
`;

const BigLabel = styled.div`
  line-height: 15px;
  white-space: nowrap;
`;

const DocBar = styled.div`
  height: 23px;
  flex: none;
  display: flex;
  align-items: flex-end;
  padding-left: 26px;
  background: #e6e6e6;
`;

const DocTab = styled.div`
  width: 174px;
  height: 20px;
  box-sizing: border-box;
  display: flex;
  align-items: center;
  padding-left: 35px;
  background: #f2f2f2;
  clip-path: polygon(0 100%, 19px 0, 100% 0, 100% 100%);
`;

const DocTitle = styled.span`
  font-weight: 500;
  font-size: 12.3px;
  color: #444;
  white-space: nowrap;
`;

const DocClose = styled.span`
  margin-left: 13px;
  color: #555;
  font-family: "DejaVu Sans", sans-serif;
  font-size: 10px;
`;

const DocMenu = styled.div`
  width: 0;
  height: 0;
  margin-left: auto;
  margin-right: 2px;
  margin-bottom: 8px;
  border-left: 5px solid transparent;
  border-right: 5px solid transparent;
  border-top: 5px solid #666;
`;

const Workspace = styled.div`
  height: 808px;
  flex: none;
  display: flex;
`;

const StripColumn = styled.div`
  width: 26px;
  flex: none;
  padding-top: 133px;
  box-sizing: border-box;
`;

const Strip = styled.div`
  height: 590px;
  display: flex;
  flex-direction: column;
  align-items: center;
  background: #f0f0f0;
`;

const Dots = styled.div`
  width: 13px;
  height: 8px;
  margin-bottom: 2px;
  flex: none;
  background: radial-gradient(circle, #777 0.8px, transparent 1px) 0 50% / 3.25px 8px repeat-x;
`;

const StripIcon = styled.div`
  height: 22px;
  flex: none;
  display: flex;
  align-items: center;
`;

const StripRule = styled.div<{ $mb: number }>`
  width: 100%;
  height: 1px;
  flex: none;
  margin-top: 4px;
  margin-bottom: ${p => p.$mb}px;
  background: #d4d4d4;
`;

const StripBack = styled.div<{ $mt: number }>`
  width: 0;
  height: 0;
  flex: none;
  margin: ${p => p.$mt}px 16px 5px 0;
  border-top: 3px solid transparent;
  border-bottom: 3px solid transparent;
  border-right: 4px solid #666;
`;

const Panel = styled.div`
  width: 242px;
  flex: none;
  display: flex;
  flex-direction: column;
`;

const PanelHeader = styled.div`
  height: 25px;
  flex: none;
  display: flex;
  align-items: center;
  justify-content: space-between;
  padding-left: 4px;
  color: #555;
  background: #e6e6e6;
`;

const PanelTools = styled.div`
  display: flex;
  align-items: center;
  width: 57px;
  gap: 9px;
`;

const HeaderClose = styled.span`
  font-size: 10px;
  color: #555;
  font-family: "DejaVu Sans", sans-serif;
`;

const PanelBody = styled.div`
  flex: 1;
  padding-left: 6px;
  padding-right: 6px;
  background: #fff;
  color: #333;
`;

const SectionRow = styled.div<{ $h: number; $mt?: number }>`
  height: ${p => p.$h}px;
  margin-top: ${p => p.$mt || 0}px;
  display: flex;
  align-items: center;
`;

const Disclose = styled.span<{ $open: boolean }>`
  width: 0;
  height: 0;
  margin-left: 7px;
  margin-right: ${p => (p.$open ? 10 : 11)}px;
  ${p =>
    p.$open
      ? `border-left: 3px solid transparent; border-right: 3px solid transparent; border-bottom: 4px solid #aaa; transform: rotate(-45deg);`
      : `border-top: 4px solid transparent; border-bottom: 4px solid transparent; border-left: 5px solid #ccc;`}
`;

const SectionTitle = styled.span`
  font-weight: 700;
  color: #444;
`;

const ActionStrip = styled.div`
  height: 24px;
  display: flex;
  align-items: center;
  gap: 4px;
  padding-left: 11px;
  background: #f0f0f0;
`;

const CheckRow = styled.div<{ $h: number }>`
  height: ${p => p.$h}px;
  display: flex;
  align-items: center;
  gap: 5px;
  white-space: nowrap;
`;

const CheckBox = styled.span<{ $checked?: boolean }>`
  width: 13px;
  height: 13px;
  flex: none;
  box-sizing: border-box;
  border: 1px solid #333;
  background: #fff;
  color: #222;
  font-size: 11px;
  line-height: 11px;
  text-align: center;
  font-family: "DejaVu Sans", sans-serif;
`;

const Radio = styled.span<{ $on?: boolean }>`
  width: 13px;
  height: 13px;
  flex: none;
  box-sizing: border-box;
  border: 1px solid #333;
  border-radius: 50%;
  background: ${p => (p.$on ? 'radial-gradient(circle, #222 3.500px, #fff 4px)' : '#fff')};
`;

const FieldList = styled.div`
  margin-top: 6px;
  display: flex;
  flex-direction: column;
  gap: 6px;
`;

const FieldRow = styled.div`
  height: 19px;
  display: flex;
  align-items: center;
`;

const FieldLabel = styled.span`
  width: 77px;
  flex: none;
  white-space: nowrap;
  color: #2f3a50;
`;

const FieldInput = styled.input`
  width: 153px;
  height: 19px;
  box-sizing: border-box;
  padding: 0 4px;
  border: 1px solid #555;
  outline: none;
  font: inherit;
  color: #333;
`;

const OptionList = styled.div`
  margin-top: 3.500px;
`;

const DisabledButton = styled.div`
  width: 228px;
  height: 20px;
  margin: 3.500px 0 0 1px;
  line-height: 20px;
  text-align: center;
  background: #c8c8c8;
  color: #868686;
`;

const PanelTabs = styled.div`
  height: 23px;
  flex: none;
  display: flex;
  align-items: flex-start;
  padding-left: 1px;
  box-sizing: border-box;
  background: #e6e6e6;
  border-top: 1px solid #cfcfcf;
`;

const PanelTab = styled.div<{ $w: number; $pl: number; $active?: boolean }>`
  width: ${p => p.$w}px;
  height: 21px;
  box-sizing: border-box;
  display: flex;
  align-items: center;
  gap: 2px;
  padding-left: ${p => p.$pl}px;
  color: #444;
  background: ${p => (p.$active ? '#fff' : 'transparent')};
  border: 1px solid ${p => (p.$active ? '#a8a8a8' : 'transparent')};
  border-top: 0;
`;

const Splitter = styled.div`
  width: 5px;
  flex: none;
  background: #dedede;
`;

const Canvas = styled.div`
  flex: 1;
  background: linear-gradient(to bottom, #d0d0d0, #f0f0f0);
`;

const AxisLabel = styled.text`
  font-size: 10px;
  font-family: ${FONT};
`;

const CatalogBar = styled.div`
  height: 31px;
  flex: none;
  display: flex;
  padding-left: 7px;
  background: #e6e6e6;
  border-bottom: 1px solid #c8c8c8;
  box-sizing: border-box;
`;

const CatalogTab = styled.div`
  width: 104px;
  height: 30px;
  box-sizing: border-box;
  display: flex;
  align-items: center;
  gap: 2px;
  padding-top: 2px;
  white-space: nowrap;
  color: #555;
  border-bottom: 5px solid #d2d2d2;
`;

const StatusBar = styled.div`
  height: 24px;
  flex: none;
  display: flex;
  align-items: center;
  background: #f0f0f0;
`;

const HelpText = styled.span`
  padding-left: 2px;
  color: #333;
`;

const StatusRight = styled.div`
  margin-left: auto;
  display: flex;
  align-items: center;
`;

const StatusText = styled.span<{ $w: number; $tight?: boolean }>`
  width: ${p => p.$w}px;
  white-space: nowrap;
  color: #444;
  letter-spacing: ${p => (p.$tight ? '-0.2px' : '0')};
`;

const StatusSlot = styled.div<{ $w: number; $active?: boolean }>`
  width: ${p => p.$w}px;
  height: 22px;
  flex: none;
  display: flex;
  align-items: center;
  justify-content: center;
  background: ${p => (p.$active ? '#c8c8c8' : 'transparent')};
`;

const Combo = styled.div<{ $w: number; $ml: number }>`
  width: ${p => p.$w}px;
  margin-left: ${p => p.$ml}px;
  height: 19px;
  box-sizing: border-box;
  display: flex;
  align-items: center;
  justify-content: space-between;
  padding: 0 5px 0 2px;
  background: #fff;
  color: #444;
`;

const TaskStrip = styled.div`
  height: 3px;
  flex: none;
  display: flex;
`;

const TaskPart = styled.div<{ $w?: number; $c: string }>`
  ${p => (p.$w ? `width: ${p.$w}px;` : 'flex: 1;')}
  background: ${p => p.$c};
`;
